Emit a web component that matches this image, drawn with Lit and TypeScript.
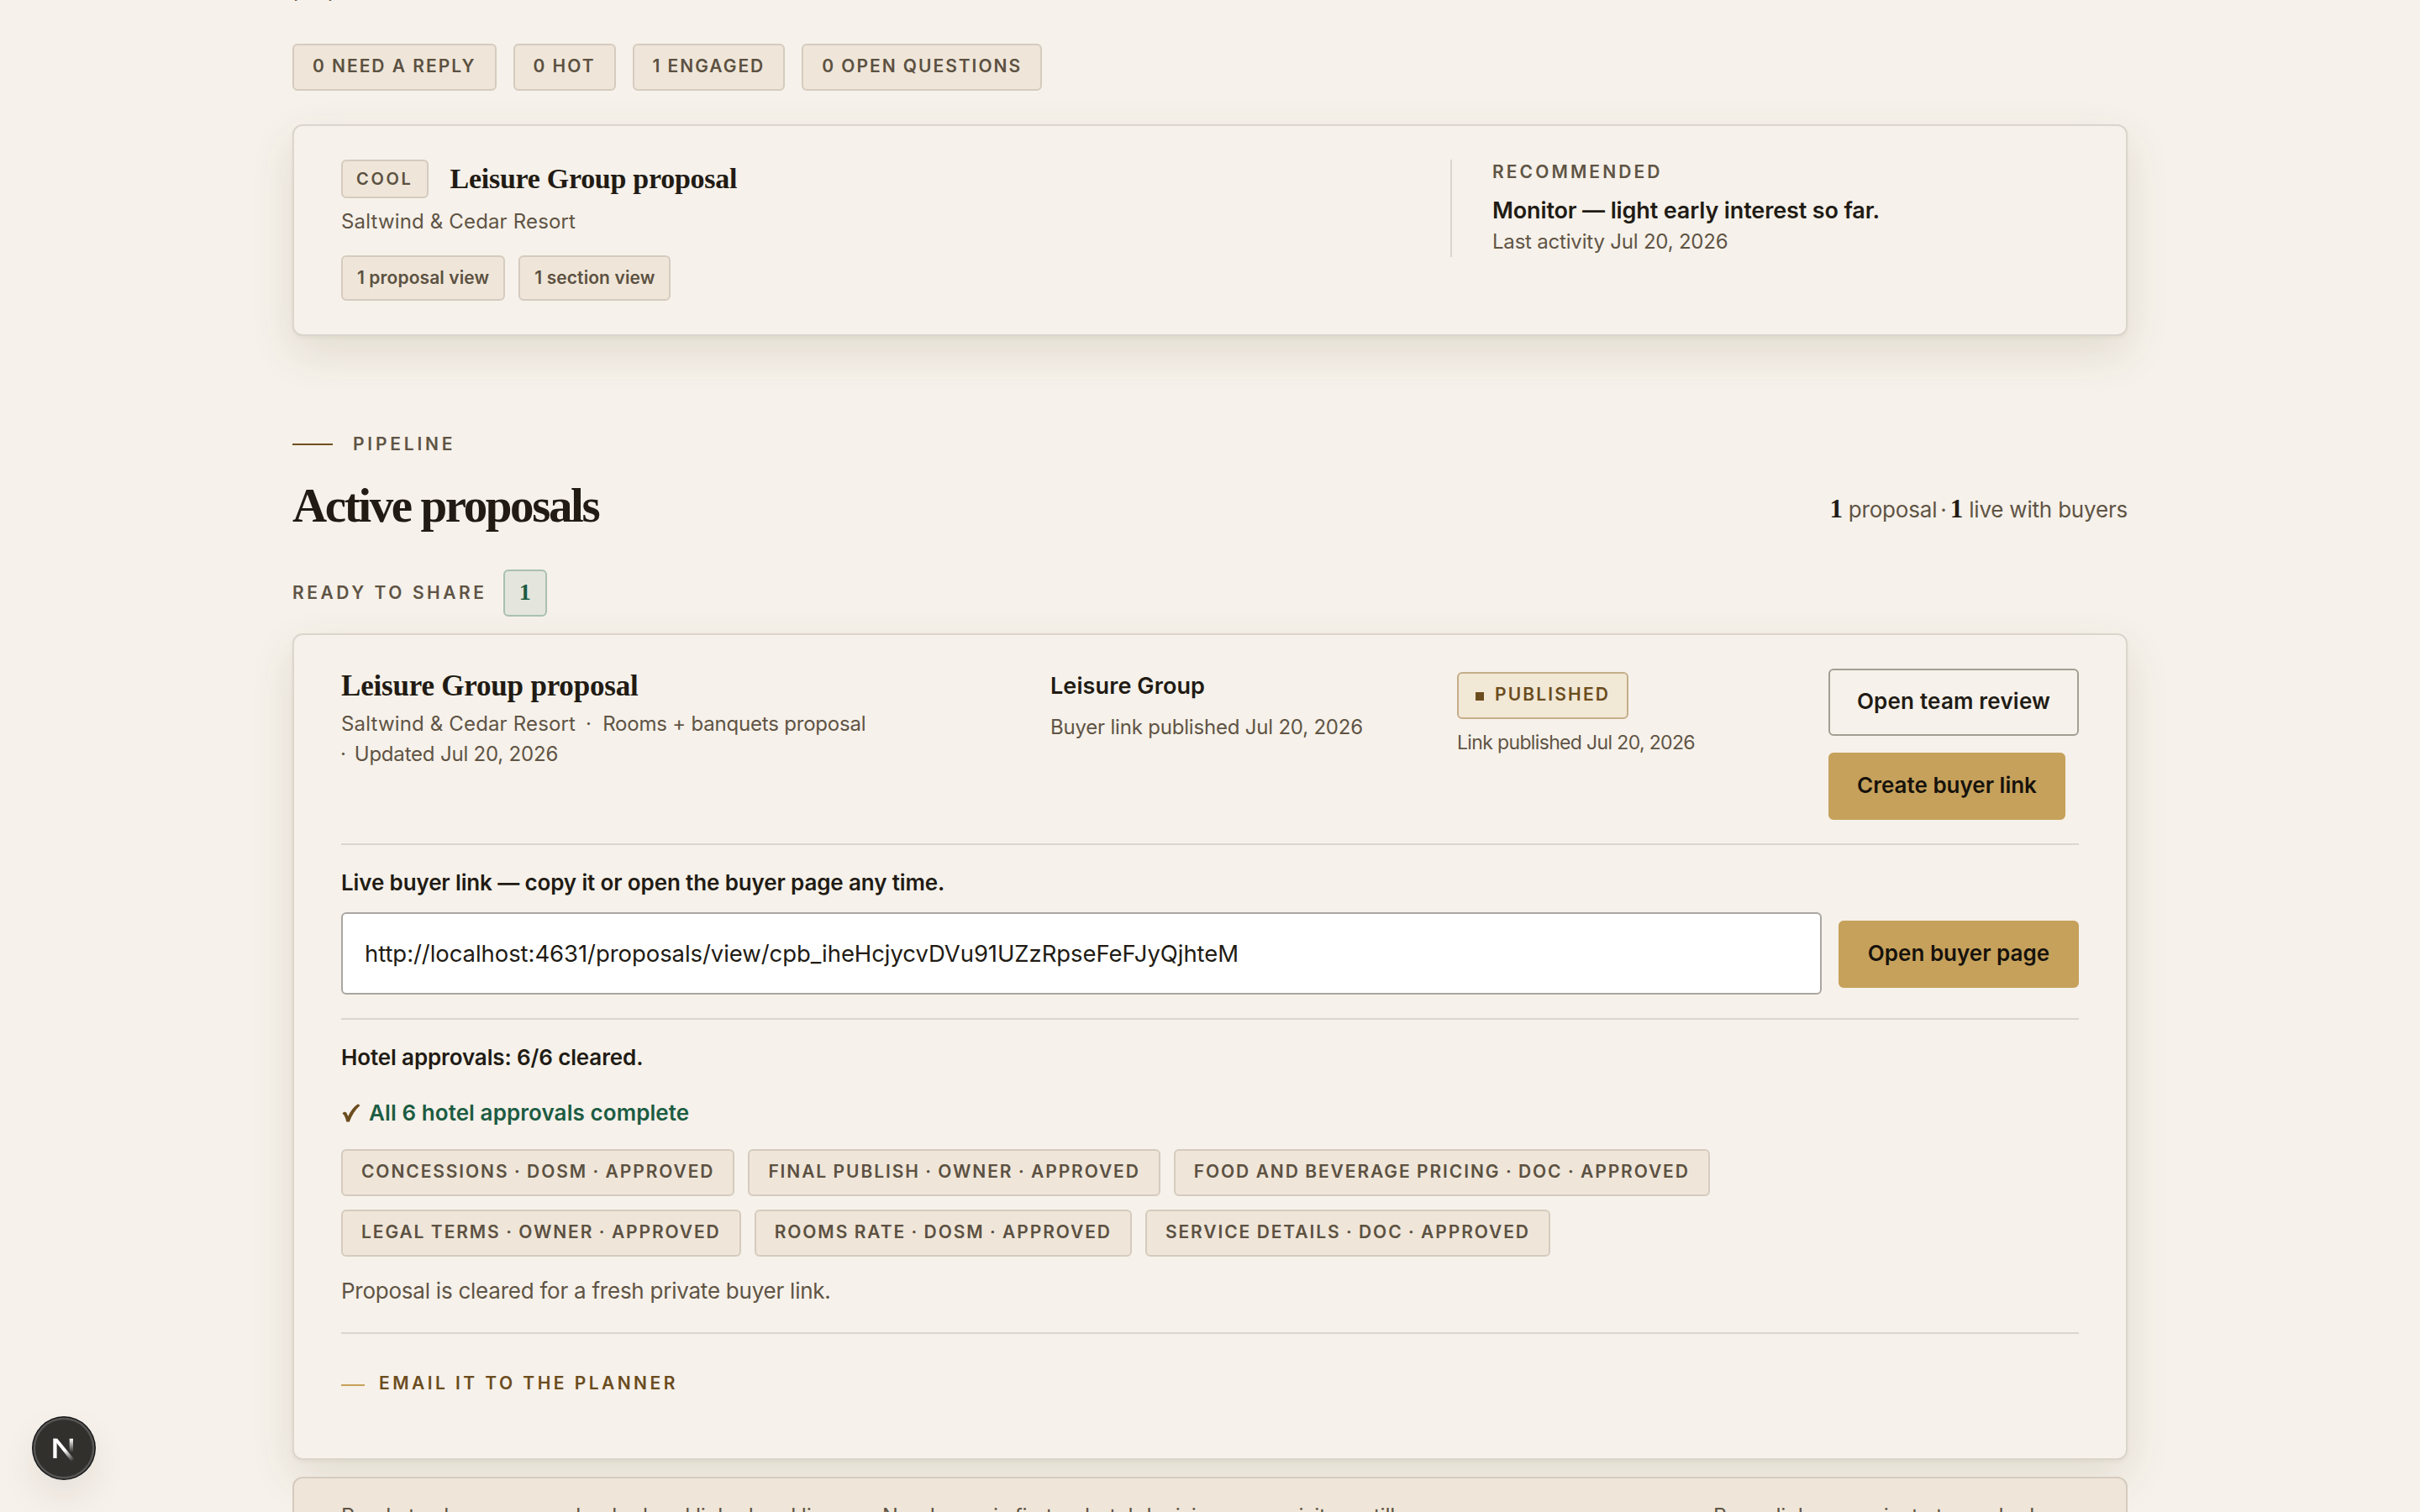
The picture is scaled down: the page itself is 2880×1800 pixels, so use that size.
import { html, css, LitElement } from 'lit';
import { customElement, property } from 'lit/decorators.js';

@customElement('status-chip')
export class StatusChip extends LitElement {
  static styles = css`
    :host {
      display: block;
      box-sizing: border-box;
      height: 56px;
      padding: 0 22px;
      border: 2px solid #d5cbbe;
      border-radius: 6px;
      background: #efe6d9;
      color: #5c5142;
      font-size: 21px;
      font-weight: 600;
      line-height: 49px;
      letter-spacing: 1.97px;
      white-space: nowrap;
    }
    :host([kind="approval"]) {
      letter-spacing: 1.9px;
      word-spacing: -0.7px;
    }
    :host([kind="heat"]) {
      height: 46px;
      padding: 0 16px;
      font-size: 20px;
      line-height: 42px;
      letter-spacing: 2.7px;
    }
    :host([kind="signal"]) {
      height: 54px;
      padding: 0 17px;
      line-height: 49px;
      letter-spacing: 0.1px;
    }
    :host([kind="published"]) {
      display: flex;
      width: fit-content;
      align-items: baseline;
      gap: 13px;
      padding: 0 20px;
      border-color: #c5ae8b;
      background: #f1e8d5;
      color: #6b4c1e;
      letter-spacing: 2.15px;
    }
    .dot {
      width: 10px;
      height: 10px;
      background: #6b4c1e;
    }
  `;

  @property({ reflect: true }) kind = 'plain';

  render() {
    return html`${this.kind === 'published' ? html`<span class="dot"></span>` : ''}<slot></slot>`;
  }
}

@customElement('app-root')
export class AppRoot extends LitElement {
  static styles = css`
    :host {
      display: block;
      position: relative;
      height: 1800px;
      overflow: hidden;
      background: #f6f1ea;
      color: #211b14;
      font-family: Inter, "Liberation Sans", sans-serif;
    }
    main {
      width: 2184px;
      margin: 0 auto;
      display: flow-root;
    }
    .serif {
      font-family: "Liberation Serif", serif;
      font-weight: 700;
    }
    .row {
      display: flex;
    }
    .muted {
      color: #5f5445;
    }
    .intro {
      margin: -28px 0 50px 1px;
      font-size: 26px;
      line-height: 30px;
    }
    .stats {
      gap: 20px;
    }
    .card {
      box-sizing: border-box;
      border: 2px solid #dbd5cd;
      border-radius: 12px;
      background: #f6f1ea;
      padding: 40px 56px;
      box-shadow: 0 2px 4px rgba(70, 64, 24, 0.05), 0 20px 52px rgba(80, 74, 24, 0.12);
    }
    .lead {
      display: grid;
      grid-template-columns: 1320px 1fr;
      align-items: start;
      height: 252px;
      margin-top: 40px;
    }
    .lead-head {
      align-items: center;
      gap: 26px;
    }
    .lead-title {
      font-size: 34px;
      letter-spacing: -0.28px;
    }
    .meta {
      font-size: 24px;
      line-height: 36px;
      letter-spacing: 0.16px;
    }
    .tight {
      letter-spacing: -0.2px;
    }
    .lead .meta {
      margin-top: 10px;
    }
    .signals {
      gap: 16px;
      margin-top: 22px;
    }
    .advice {
      box-sizing: border-box;
      height: 116px;
      border-left: 2px solid #dbd5cd;
      padding-left: 48px;
    }
    .label {
      font-size: 21px;
      font-weight: 600;
      letter-spacing: 3.8px;
      line-height: 30px;
    }
    .advice .label {
      letter-spacing: 3.1px;
      line-height: 29px;
    }
    .advice-text {
      margin-top: 11px;
      font-size: 27px;
      font-weight: 600;
      line-height: 42px;
      letter-spacing: -0.13px;
    }
    .lead .advice .meta {
      margin-top: -1px;
      line-height: 34px;
    }
    .eyebrow {
      align-items: center;
      gap: 24px;
      margin-top: 114px;
    }
    .rule {
      width: 48px;
      height: 2px;
      background: #6f4f20;
    }
    .heading {
      justify-content: space-between;
      margin-top: 25px;
    }
    h2 {
      margin: 0;
      font-size: 57px;
      line-height: 66px;
      letter-spacing: -2.4px;
    }
    .totals {
      padding-top: 21px;
      font-size: 26px;
      line-height: 34px;
      letter-spacing: -0.2px;
    }
    .totals .serif {
      font-size: 31px;
      line-height: 20px;
      color: #211b14;
    }
    .mid {
      margin: 0 -3px;
    }
    .group {
      align-items: center;
      gap: 19px;
      margin: 43px 0 20px;
    }
    .group .label {
      letter-spacing: 3.55px;
    }
    .count {
      box-sizing: border-box;
      width: 52px;
      height: 56px;
      border: 2px solid #a9c0b1;
      border-radius: 6px;
      background: #e4e5dd;
      color: #1c5c42;
      font-size: 28px;
      line-height: 50px;
      text-align: center;
    }
    .deal {
      padding-bottom: 0;
      height: 984px;
    }
    .summary {
      display: grid;
      grid-template-columns: 843px 485px 442px 298px;
      height: 208px;
    }
    .deal-title {
      font-size: 35px;
      line-height: 40px;
      letter-spacing: -0.2px;
      margin: 1px 0 7px;
    }
    .sep {
      margin: 0 13px 0 12px;
    }
    .sep.first {
      margin: 0 10px 0 -1px;
    }
    .client {
      margin: 3px 0 13px 1px;
      font-size: 27px;
      font-weight: 600;
      line-height: 36px;
      letter-spacing: 0.1px;
    }
    .buyer {
      margin-left: 1px;
    }
    .state {
      padding-top: 4px;
    }
    .state-note {
      margin-top: 11px;
      font-size: 23px;
      line-height: 34px;
      letter-spacing: -0.65px;
    }
    .btn {
      box-sizing: border-box;
      height: 80px;
      border: 2px solid #c6a15b;
      border-radius: 6px;
      background: #c6a15b;
      color: #16120c;
      font-size: 26px;
      font-weight: 600;
      line-height: 74px;
      text-align: center;
    }
    .btn.outline {
      border-color: #a39d93;
      background: none;
      color: #211b14;
      letter-spacing: 0.2px;
      margin-bottom: 20px;
    }
    .btn.create {
      width: 282px;
    }
    .btn.open {
      width: 286px;
      margin-top: 2px;
    }
    .divider {
      height: 2px;
      background: #dad5cd;
    }
    .strong {
      padding: 27px 0 17px;
      font-size: 26px;
      font-weight: 600;
      line-height: 36px;
      letter-spacing: -0.13px;
    }
    .link-row {
      align-items: center;
      gap: 20px;
      margin-bottom: 28px;
    }
    .url {
      box-sizing: border-box;
      flex: 1;
      height: 98px;
      border: 2px solid #aaa6a1;
      border-radius: 6px;
      background: #fff;
      padding-left: 26px;
      font-size: 27.5px;
      line-height: 94px;
      letter-spacing: -0.07px;
    }
    .cleared {
      align-items: center;
      gap: 10px;
      padding: 13px 0 25px;
      font-size: 26px;
      font-weight: 600;
      line-height: 36px;
      letter-spacing: 0.08px;
      color: #1c5c42;
    }
    .approvals {
      flex-wrap: wrap;
      gap: 16px;
    }
    .note {
      padding: 23px 0 31px;
      font-size: 26px;
      line-height: 36px;
      letter-spacing: -0.24px;
    }
    .email {
      align-items: center;
      gap: 17px;
      margin-top: 44px;
      color: #6b4c1e;
    }
    .email .label {
      letter-spacing: 3.45px;
    }
    .email .rule {
      width: 28px;
      margin-top: 4px;
      background: #c6a15b;
    }
    .footnote {
      position: relative;
      box-sizing: border-box;
      height: 120px;
      margin-top: 20px;
      border: 2px solid #d5cbbe;
      border-radius: 12px;
      background: #efe6d9;
      display: grid;
      grid-template-columns: 644px 989px 1fr;
      padding: 27px 56px;
      font-size: 25px;
      line-height: 36px;
      letter-spacing: -0.2px;
      white-space: nowrap;
    }
    .badge {
      position: absolute;
      left: 38px;
      top: 1686px;
      width: 76px;
      height: 76px;
      border-radius: 50%;
      box-shadow: 0 20px 44px rgba(33, 27, 20, 0.08);
    }
  `;

  approvals = [
    'CONCESSIONS · DOSM · APPROVED',
    'FINAL PUBLISH · OWNER · APPROVED',
    'FOOD AND BEVERAGE PRICING · DOC · APPROVED',
    'LEGAL TERMS · OWNER · APPROVED',
    'ROOMS RATE · DOSM · APPROVED',
    'SERVICE DETAILS · DOC · APPROVED',
  ];

  stats = ['0 NEED A REPLY', '0 HOT', '1 ENGAGED', '0 OPEN QUESTIONS'];

  _renderLead() {
    return html`
      <section class="card lead">
        <div>
          <div class="row lead-head">
            <status-chip kind="heat">COOL</status-chip>
            <div class="serif lead-title">Leisure Group proposal</div>
          </div>
          <div class="meta muted">Saltwind &amp; Cedar Resort</div>
          <div class="row signals">
            <status-chip kind="signal">1 proposal view</status-chip>
            <status-chip kind="signal">1 section view</status-chip>
          </div>
        </div>
        <div class="advice">
          <div class="label muted">RECOMMENDED</div>
          <div class="advice-text">Monitor — light early interest so far.</div>
          <div class="meta tight muted">Last activity Jul 20, 2026</div>
        </div>
      </section>
    `;
  }

  _renderDeal() {
    return html`
      <section class="card deal">
        <div class="summary">
          <div>
            <div class="serif deal-title">Leisure Group proposal</div>
            <div class="meta muted">Saltwind &amp; Cedar Resort<span class="sep">·</span><span class="tight">Rooms + banquets proposal</span></div>
            <div class="meta tight muted"><span class="sep first">·</span>Updated Jul 20, 2026</div>
          </div>
          <div>
            <div class="client">Leisure Group</div>
            <div class="meta tight muted buyer">Buyer link published Jul 20, 2026</div>
          </div>
          <div class="state">
            <status-chip kind="published">PUBLISHED</status-chip>
            <div class="state-note muted">Link published Jul 20, 2026</div>
          </div>
          <div>
            <div class="btn outline">Open team review</div>
            <div class="btn create">Create buyer link</div>
          </div>
        </div>
        <div class="divider"></div>
        <div class="strong">Live buyer link — copy it or open the buyer page any time.</div>
        <div class="row link-row">
          <div class="url">http://localhost:4631/proposals/view/cpb_iheHcjycvDVu91UZzRpseFeFJyQjhteM</div>
          <div class="btn open">Open buyer page</div>
        </div>
        <div class="divider"></div>
        <div class="strong">Hotel approvals: 6/6 cleared.</div>
        <div class="row cleared">
          <svg width="23" height="22" viewBox="0 0 23 22">
            <path d="M1.500 11.500 C3 9 6 9 7 12 L8.200 15 C11 9 15 3.500 20 .3 L22.500 2 C17 7 12.500 14 9.800 21.500 L6.300 21.500 C5.500 17.500 4 13.500 1.500 11.500 Z" fill="#6b4c1e"/>
          </svg>
          <span>All 6 hotel approvals complete</span>
        </div>
        <div class="row approvals">
          ${this.approvals.map((a) => html`<status-chip kind="approval">${a}</status-chip>`)}
        </div>
        <div class="note muted">Proposal is cleared for a fresh private buyer link.</div>
        <div class="divider"></div>
        <div class="row email">
          <div class="rule"></div>
          <div class="label">EMAIL IT TO THE PLANNER</div>
        </div>
      </section>
    `;
  }

  render() {
    return html`
      <main>
        <div class="intro muted">proposal</div>
        <div class="row stats">
          ${this.stats.map((s) => html`<status-chip>${s}</status-chip>`)}
        </div>
        ${this._renderLead()}
        <div class="row eyebrow">
          <div class="rule"></div>
          <div class="label muted">PIPELINE</div>
        </div>
        <div class="row heading">
          <h2 class="serif">Active proposals</h2>
          <div class="totals muted"><span class="serif">1</span> proposal <span class="mid">·</span> <span class="serif">1</span> live with buyers</div>
        </div>
        <div class="row group">
          <div class="label muted">READY TO SHARE</div>
          <div class="count serif">1</div>
        </div>
        ${this._renderDeal()}
        <section class="footnote muted">
          <span>Ready to share means checked and linked and live.</span>
          <span>Needs you is first — hotel decisions your visitors still</span>
          <span>Buyer links are private to marked</span>
        </section>
      </main>
      <div class="badge">
        <svg width="76" height="76" viewBox="0 0 76 76">
          <defs>
            <linearGradient id="diag" gradientUnits="userSpaceOnUse" x1="40" y1="40" x2="49" y2="53">
              <stop offset="0" stop-color="#fff"/>
              <stop offset="1" stop-color="#fff" stop-opacity="0"/>
            </linearGradient>
            <linearGradient id="stem" gradientUnits="userSpaceOnUse" x1="0" y1="27" x2="0" y2="43">
              <stop offset="0" stop-color="#fff"/>
              <stop offset="1" stop-color="#fff" stop-opacity="0"/>
            </linearGradient>
          </defs>
          <circle cx="38" cy="38" r="38" fill="#161616"/>
          <circle cx="38" cy="38" r="36.500" fill="#575655"/>
          <circle cx="38" cy="38" r="34" fill="#31302d"/>
          <rect x="25.300" y="26.700" width="4.300" height="23.300" fill="#fff"/>
          <path d="M25.300 26.700 H30.300 L51 52 L47.500 54.500 Z" fill="url(#diag)"/>
          <rect x="44.700" y="26.700" width="4.300" height="16.300" fill="url(#stem)"/>
        </svg>
      </div>
    `;
  }
}
